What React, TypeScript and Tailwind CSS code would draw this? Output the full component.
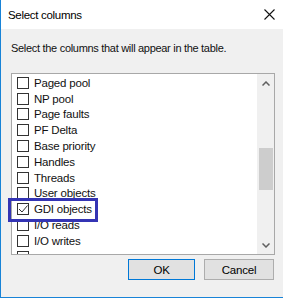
import React from "react";

const items = [
  "Paged pool",
  "NP pool",
  "Page faults",
  "PF Delta",
  "Base priority",
  "Handles",
  "Threads",
  "User objects",
  "GDI objects",
  "I/O reads",
  "I/O writes",
];

function Box({ checked }: { checked?: boolean }) {
  return (
    <div className="w-[12px] h-[12px] border border-[#333] bg-white flex items-center justify-center shrink-0">
      {checked && (
        <svg width="10" height="10" viewBox="0 0 10 10">
          <path d="M1 5 L4 8 L9.5 1.5" fill="none" stroke="#333" strokeWidth="1" />
        </svg>
      )}
    </div>
  );
}

export default function App() {
  return (
    <div
      className="relative w-[283px] h-[300px] bg-white overflow-hidden text-[#000]"
      style={{ fontFamily: '"Liberation Sans", Arial, sans-serif' }}
    >
      <div className="flex flex-col w-[283px] h-[298px] border-l border-b border-[#1883d7]">
        {/* title bar */}
        <div className="relative h-[29px] bg-white flex items-center pl-[7px] shrink-0">
          <span className="text-[11.5px] leading-[14px] tracking-[-0.3px] pt-[1px]">Select columns</span>
          <svg
            className="absolute left-[263px] top-[9px]"
            width="11"
            height="11"
            viewBox="0 0 11 11"
          >
            <path d="M0.5 0.5 L10.5 10.5 M10.5 0.5 L0.5 10.5" stroke="#111" strokeWidth="1.1" />
          </svg>
        </div>
        {/* body */}
        <div className="flex-1 bg-[#f0f0f0] flex flex-col">
          <div className="pl-[10px] pt-[12px] h-[44px] text-[11px] leading-[14px] tracking-[-0.3px] text-[#111]">
            Select the columns that will appear in the table.
          </div>
          <div className="ml-[10px] w-[264px] h-[182px] border border-[#a8a8a8] bg-white flex">
            <div className="flex-1 overflow-hidden pt-[1px] pl-[5px]">
              {items.map((t) => (
                <div key={t} className="h-[15.8px] flex items-center gap-[5px]">
                  <Box checked={t === "GDI objects"} />
                  <span className="text-[11.5px] leading-[14px] tracking-[-0.2px] text-[#111]">{t}</span>
                </div>
              ))}
              <div className="h-[15.8px] flex items-center">
                <Box />
              </div>
            </div>
            <div className="w-[17px] bg-[#f0f0f0] flex flex-col items-center shrink-0">
              <div className="h-[18px] flex items-center justify-center">
                <svg width="8" height="5" viewBox="0 0 8 5">
                  <path d="M0.5 4.5 L4 1 L7.5 4.5" fill="none" stroke="#606060" strokeWidth="1.5" />
                </svg>
              </div>
              <div className="h-[56px]" />
              <div className="w-[14px] h-[42px] bg-[#cdcdcd]" />
              <div className="flex-1" />
              <div className="h-[18px] flex items-center justify-center">
                <svg width="8" height="5" viewBox="0 0 8 5">
                  <path d="M0.5 0.5 L4 4 L7.5 0.5" fill="none" stroke="#606060" strokeWidth="1.5" />
                </svg>
              </div>
            </div>
          </div>
          <div className="flex justify-end gap-[9px] pr-[9px] pt-[4px]">
            <button className="w-[67px] h-[21px] bg-[#e1e1e1] border border-[#0078d7] text-[11.5px] leading-[14px] tracking-[-0.2px]">
              OK
            </button>
            <button className="w-[70px] h-[21px] bg-[#e1e1e1] border border-[#adadad] text-[11.5px] leading-[14px] tracking-[-0.2px]">
              Cancel
            </button>
          </div>
        </div>
      </div>
      {/* annotation highlight */}
      <div className="absolute left-[8px] top-[198px] w-[90px] h-[24px] border-[3px] border-[#3434b4]" />
    </div>
  );
}
